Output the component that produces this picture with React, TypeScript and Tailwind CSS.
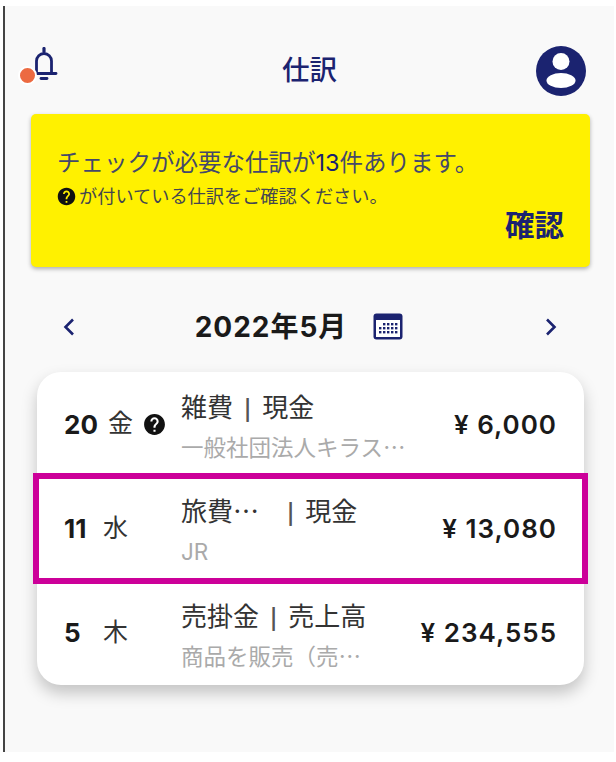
const navy = '#1b2370';

const rows = [
  { day: '20', week: '金', flag: true, left: '雑費', right: '現金', pad: '', sub: '一般社団法人キラス⋯', amount: '6,000' },
  { day: '11', week: '水', flag: false, left: '旅費⋯', right: '現金', pad: 'mr-[17px]', sub: 'JR', amount: '13,080' },
  { day: '5', week: '木', flag: false, left: '売掛金', right: '売上高', pad: '', sub: '商品を販売（売⋯', amount: '234,555' },
];

function HelpIcon({ size }: { size: number }) {
  return (
    <svg width={size} height={size} viewBox="0 0 24 24" fill="#111" className="shrink-0">
      <path d="M12 2C6.48 2 2 6.48 2 12s4.48 10 10 10 10-4.48 10-10S17.52 2 12 2zm1 17h-2v-2h2v2zm2.07-7.75l-.9.92C13.45 12.9 13 13.5 13 15h-2v-.5c0-1.1.45-2.1 1.17-2.83l1.24-1.26c.37-.36.59-.86.59-1.41 0-1.1-.9-2-2-2s-2 .9-2 2H8c0-2.21 1.79-4 4-4s4 1.79 4 4c0 .88-.36 1.68-.93 2.25z" />
    </svg>
  );
}

function Bell() {
  return (
    <div className="relative w-[40px] h-[40px]">
      <svg width="30" height="36" viewBox="0 0 30 36" fill="none" stroke={navy} strokeWidth="2.8" className="absolute left-[4px] top-[-4px]">
        <path d="M15 1.5v3" strokeLinecap="round" strokeWidth="3.2" />
        <path d="M7.5 26V14a7.5 7.5 0 0 1 15 0v12" />
        <path d="M3 26.5h24" strokeLinecap="round" />
        <path d="M12 31.5h6" strokeLinecap="round" strokeWidth="2.8" />
      </svg>
      <div className="absolute left-[-7px] top-[15px] w-[19px] h-[19px] rounded-full bg-[#ec6a41] border-[2px] border-white" />
    </div>
  );
}

function Avatar() {
  return (
    <svg width="50" height="50" viewBox="0 0 50 50">
      <circle cx="25" cy="25" r="25" fill={navy} />
      <circle cx="25" cy="15.5" r="8.5" fill="#fff" />
      <ellipse cx="25" cy="34.5" rx="14.5" ry="7.5" fill="#fff" />
    </svg>
  );
}

function CalendarIcon() {
  return (
    <svg width="30" height="27" viewBox="0 0 30 27">
      <rect x="0.5" y="0.5" width="29" height="26" rx="3" fill={navy} />
      <rect x="3" y="7" width="24" height="17" fill="#fff" />
      {[0, 1, 2].map((r) =>
        [0, 1, 2, 3, 4].map((c) =>
          r === 0 && c === 0 ? null : (
            <rect key={`${r}-${c}`} x={6 + c * 4} y={10 + r * 4} width="2.4" height="2.4" fill={navy} />
          ),
        ),
      )}
    </svg>
  );
}

function Chevron({ flip }: { flip?: boolean }) {
  return (
    <svg width="14" height="20" viewBox="0 0 14 20" fill="none" stroke={navy} strokeWidth="2.6" className={flip ? 'rotate-180' : ''}>
      <path d="M11 2.5L3.5 10l7.5 7.5" />
    </svg>
  );
}

export default function App() {
  return (
    <div className="w-[616px] h-[762px] bg-white pt-[6px] pl-[3px] font-['Inter','Noto_Sans_CJK_JP',sans-serif]">
      <div className="relative w-[611px] h-[746px] bg-[#f9f9f9] border-l-2 border-[#444]">
        {/* Header */}
        <div className="flex items-center justify-between h-[108px] pl-[20px] pr-[28px] pt-[22px]">
          <Bell />
          <span className="text-[27.5px] font-medium text-[#1b2370] ml-[18px]">仕訳</span>
          <Avatar />
        </div>

        {/* Notice */}
        <div className="ml-[26px] w-[559px] h-[153px] bg-[#fff100] rounded-[5px] shadow-[0_2px_4px_rgba(0,0,0,0.3)] pl-[26px] pr-[26px] pt-[33px]">
          <p className="text-[23.5px] leading-[32px] text-[#44486a] whitespace-nowrap">チェックが必要な仕訳が<span className="text-[#1b2370]">13</span>件あります。</p>
          <div className="flex items-center gap-[2px] mt-[4px] ml-[-1px]">
            <HelpIcon size={21} />
            <span className="text-[18.2px] leading-[26px] text-[#44464f] whitespace-nowrap">が付いている仕訳をご確認ください。</span>
          </div>
          <div className="text-right text-[29.5px] leading-[38px] font-bold text-[#1b2370] mt-[-3px]">確認</div>
        </div>

        {/* Month */}
        <div className="flex items-center justify-between h-[105px] pl-[57px] pr-[56px] pt-[14px]">
          <Chevron />
          <div className="flex items-center mr-[22px]">
            <span className="text-[28px] font-bold tracking-[1px] text-[#1a1a1a]">2022年5月</span>
            <span className="ml-[26px]"><CalendarIcon /></span>
          </div>
          <Chevron flip />
        </div>

        {/* List */}
        <div className="ml-[32px] w-[547px] h-[313px] bg-white rounded-[24px] shadow-[0_8px_16px_rgba(0,0,0,0.22)] flex flex-col">
          {rows.map((row) => (
            <div key={row.day} className="flex-1 flex items-center pl-[27px] pr-[27px]">
              <div className="w-[117px] flex items-center">
                <span className="min-w-[39px] pr-[10px] text-[26px] font-bold text-[#1a1a1a]">{row.day}</span>
                <span className="text-[25px] text-[#333]">{row.week}</span>
                {row.flag && <span className="ml-[9px]"><HelpIcon size={25} /></span>}
              </div>
              <div className="flex-1 min-w-0 pt-[7px]">
                <p className="text-[26px] leading-[36px] text-[#333] whitespace-nowrap">
                  <span className={row.pad}>{row.left}</span>
                  <span className="mx-[11px] text-[20px] font-semibold text-[#555]">|</span>
                  {row.right}
                </p>
                <p className="text-[22.5px] leading-[34px] mt-[3px] text-[#aaa] whitespace-nowrap">{row.sub}</p>
              </div>
              <span className="text-[26px] font-semibold tracking-[1px] text-[#1a1a1a] whitespace-nowrap">¥ {row.amount}</span>
            </div>
          ))}
        </div>

        {/* Highlight */}
        <div className="absolute left-[28px] top-[467px] w-[555px] h-[111px] border-[6px] border-[#cc0099]" />
      </div>
    </div>
  );
}
